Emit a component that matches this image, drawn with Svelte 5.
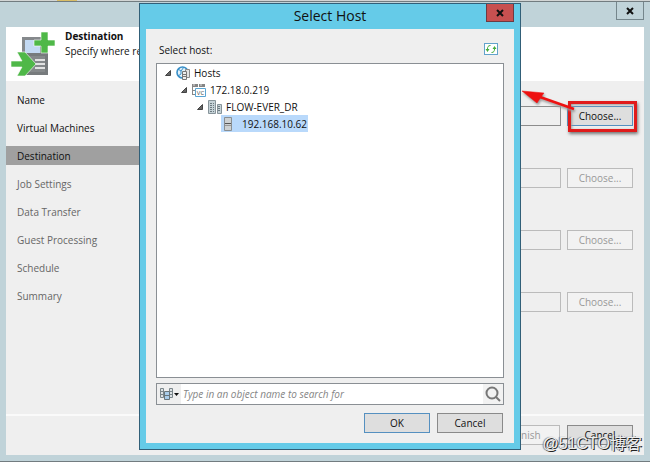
<script>
  const steps = ['Name', 'Virtual Machines', 'Destination', 'Job Settings', 'Data Transfer', 'Guest Processing', 'Schedule', 'Summary'];
  const current = 2;
  const fields = ['Host or cluster', 'Resource pool', 'VM folder', 'Datastore'];
  const tree = [
    { level: 0, icon: 'hosts', label: 'Hosts', open: true },
    { level: 1, icon: 'vcenter', label: '172.18.0.219', open: true },
    { level: 2, icon: 'datacenter', label: 'FLOW-EVER_DR', open: true },
    { level: 3, icon: 'host', label: '192.168.10.62', open: false }
  ];

  let selected = $state('192.168.10.62');
  let query = $state('');
</script>

<div class="screen">
  <div class="tab"></div>
  <div class="wizard">
    <div class="caption"><button class="close" aria-label="Close wizard">
      <svg viewBox="0 0 8 8"><path d="M1 1l6 6M7 1l-6 6" /></svg>
    </button></div>

    <div class="page">
      <header>
        <svg class="logo" viewBox="0 0 44 46">
          <path d="M11 6h21v20H11z" fill="#85898c" />
          <path d="M14 9h15v14H14z" fill="#c3d9f3" />
          <path d="M13 22h24v22H13z" fill="#777b7d" />
          <path d="M16 25h18v16H16z" fill="#85898b" />
          <path d="M24 29h10M24 33h10M24 37h10" stroke="#fff" stroke-width="1.5" />
          <path d="M30 1h7v8h7v6h-7v7h-7v-7h-7V9h7z" fill="#4fb848" stroke="#fff" stroke-width="0.6" />
          <path d="M0 30h11L6 21h8l11 12-11 12H6l5-9H0z" fill="#4fb848" stroke="#fff" stroke-width="0.6" />
        </svg>
        <div>
          <h1>Destination</h1>
          <p>Specify where re</p>
        </div>
      </header>

      <div class="content">
        <nav>
          {#each steps as step, i}
            <button class="step" class:current={i === current} class:todo={i > current}>{step}</button>
          {/each}
        </nav>
        <div class="form">
          {#each fields as field, i}
            <div class="field">
              <input aria-label={field} disabled={i > 0} />
              <button class="btn" class:focused={i === 0} disabled={i > 0}>Choose...</button>
              {#if i === 0}
                <div class="marker"></div>
                <svg class="arrow" viewBox="0 0 60 24">
                  <path d="M24 8L58 20" stroke="#ee1111" stroke-width="2.5" />
                  <path d="M6 2l22 2-3 4-4 6z" fill="#ee1111" stroke="#ee1111" stroke-width="0.5" />
                </svg>
              {/if}
            </div>
          {/each}
        </div>
      </div>

      <footer>
        <button class="btn" disabled>Finish</button>
        <button class="btn">Cancel</button>
      </footer>
    </div>
  </div>

  <div class="dialog" role="dialog" aria-labelledby="dialog-title">
    <div class="titlebar">
      <h2 id="dialog-title">Select Host</h2>
      <button class="close red" aria-label="Close">
        <svg viewBox="0 0 8 8"><path d="M1 1l6 6M7 1l-6 6" /></svg>
      </button>
    </div>
    <div class="panel">
      <div class="top">
        <span>Select host:</span>
        <button class="refresh" aria-label="Refresh">
          <svg viewBox="0 0 12 10">
            <path d="M5.500 1.500C3 1.500 2.500 3 2.500 5M6.500 8.500c2.500 0 3-1.500 3-3.500" fill="none" stroke="#45ad3d" />
            <path d="M0.500 5h4l-2 3zM7.500 5h4l-2-3z" fill="#45ad3d" />
          </svg>
        </button>
      </div>

      <ul class="tree">
        {#each tree as node}
          <li class="level{node.level}">
            {#if node.open}
              <svg class="twisty" viewBox="0 0 6 6"><path d="M5.500 0.500v5h-5z" fill="#666" stroke="#444" /></svg>
            {/if}
            <button class="node" class:selected={selected === node.label} onclick={() => (selected = node.label)}>
              <svg class="icon" viewBox="0 0 14 14">
                {#if node.icon === 'hosts'}
                  <circle cx="6.500" cy="6.500" r="5.500" fill="#e3f2fb" stroke="#388fc8" stroke-width="1.600" />
                  <path d="M2 3l3 2 3-4M2 10l3-2V5" fill="none" stroke="#388fc8" />
                  <path d="M9.500 3.500h4v8h-4z" fill="#e4e4e4" stroke="#8a8a8a" />
                  <path d="M6.500 5.500h4v8h-4z" fill="#eee" stroke="#777" />
                  <path d="M7 8.500h3M7 10.500h3" stroke="#777" />
                {:else if node.icon === 'vcenter'}
                  <path d="M0 1h6v3H0zM7 1h6v3H7z" fill="#858585" />
                  <path d="M1 2h2M8 2h2" stroke="#ddd" />
                  <path d="M0.500 4v8M1 7.500h3M1 11.500h3" fill="none" stroke="#888" />
                  <path d="M3.500 5.500h10v8h-10z" fill="#fff" stroke="#5aa5d2" />
                  <text x="8.500" y="12" text-anchor="middle">VC</text>
                {:else if node.icon === 'datacenter'}
                  <path d="M0.500 0.500h7v13h-7z" fill="#c5d2d7" stroke="#87949a" />
                  <path d="M9.500 4.500h4v9h-4z" fill="#c5d2d7" stroke="#87949a" />
                  <path d="M2 3.500h4M2 5.500h4M2 7.500h4M2 9.500h4M2 11.500h4M10 6.500h3M10 8.500h3M10 10.500h3" stroke="#6c7a80" stroke-dasharray="2 1" />
                {:else}
                  <path d="M3.500 0.500h7v13h-7z" fill="#cdd1d3" stroke="#8a8f92" />
                  <path d="M4 6.500h6" stroke="#555" />
                  <path d="M4 8.500h6" stroke="#999" />
                {/if}
              </svg>
              <span>{node.label}</span>
            </button>
          </li>
        {/each}
      </ul>

      <div class="search">
        <button class="scope" aria-label="Object type">
          <svg viewBox="0 0 20 14">
            <path d="M1.500 1.500h3v9h-3zM10.500 1.500h3v9h-3z" fill="#dde2e5" stroke="#7b868b" />
            <path d="M1 4.500h4M1 7.500h4M10 4.500h4M10 7.500h4" stroke="#7b868b" />
            <path d="M5.500 4.500h5v8h-5z" fill="#a9cdeb" stroke="#69757a" />
            <path d="M6 8.500h4" stroke="#69757a" />
            <path d="M15 6h5l-2.500 3z" fill="#111" />
          </svg>
        </button>
        <input bind:value={query} placeholder="Type in an object name to search for" aria-label="Search" />
        <button class="find" aria-label="Find">
          <svg viewBox="0 0 16 16"><circle cx="7" cy="7" r="5.500" /><path d="M11 11l4 4" /></svg>
        </button>
      </div>

      <div class="actions">
        <button class="btn focused">OK</button>
        <button class="btn">Cancel</button>
      </div>
    </div>
  </div>

  <div class="watermark">@51CTO博客</div>
</div>

<style>
  :global(body) {
    margin: 0;
  }

  .screen {
    position: relative;
    display: flex;
    flex-direction: column;
    min-height: 100vh;
    box-sizing: border-box;
    background: #d2d5d5;
    font: 10px/14px "Open Sans", "Noto Sans CJK SC", sans-serif;
    color: #111;
  }

  .tab {
    width: 20px;
    height: 1px;
    margin-left: 57px;
    background: #d9bd66;
  }

  button,
  input {
    font: inherit;
    color: inherit;
    box-sizing: border-box;
    margin: 0;
    padding: 0;
    border: 0;
    border-radius: 0;
    background: none;
  }

  h1,
  h2,
  p,
  ul {
    margin: 0;
    padding: 0;
  }

  .wizard {
    flex: 1;
    display: flex;
    flex-direction: column;
    padding: 0 6px 6px;
    border-top: 1px solid #727c80;
    border-bottom: 1px solid #727c80;
    background: #c0d3d9;
  }

  .caption {
    display: flex;
    justify-content: flex-end;
    height: 25px;
  }

  .close {
    width: 28px;
    height: 18px;
    border: 1px solid #75868c;
    border-top: 0;
    display: flex;
    align-items: center;
    justify-content: center;
  }

  .close svg {
    width: 8px;
    height: 8px;
    stroke: #111;
    stroke-width: 2;
  }

  .page {
    flex: 1;
    display: flex;
    flex-direction: column;
    background: #efefef;
  }

  header {
    display: flex;
    gap: 10px;
    height: 54px;
    box-sizing: border-box;
    padding: 2px 5px;
    background: #fff;
  }

  .logo {
    width: 44px;
    height: 46px;
    margin-top: 2px;
  }

  h1 {
    font-size: 10px;
    line-height: 15px;
  }

  .content {
    flex: 1;
    display: flex;
  }

  nav {
    display: flex;
    flex-direction: column;
    gap: 9px;
    width: 160px;
    padding-top: 9px;
  }

  .step {
    height: 19px;
    padding-left: 11px;
    text-align: left;
  }

  .current {
    background: #a0a0a0;
  }

  .todo {
    color: #666;
  }

  .form {
    flex: 1;
    display: flex;
    flex-direction: column;
    gap: 42px;
    padding: 25px 11px 0 20px;
  }

  .field {
    position: relative;
    display: flex;
    gap: 6px;
  }

  .field input {
    flex: 1;
    min-width: 0;
    height: 20px;
    border: 1px solid #8c8c8c;
  }

  .field input:disabled {
    border-color: #bbb;
  }

  .btn {
    width: 66px;
    height: 20px;
    border: 1px solid #8a8a8a;
    background: #dedede;
  }

  .btn.focused {
    border-color: #5590c0;
  }

  .btn:disabled {
    color: #999;
    border-color: #bbb;
    background: #f2f2f2;
  }

  .marker {
    position: absolute;
    right: -4px;
    top: -5px;
    width: 69px;
    height: 31px;
    box-sizing: border-box;
    border: 3px solid #e01b1b;
    box-shadow: 1px 2px 3px #777, inset 1px 1px 3px #999;
  }

  .arrow {
    position: absolute;
    right: 57px;
    top: -17px;
    width: 60px;
    height: 24px;
    filter: drop-shadow(1px 2px 1px #999);
  }

  footer {
    display: flex;
    justify-content: flex-end;
    gap: 7px;
    padding: 9px 11px 10px;
    border-top: 2px solid #fafafa;
  }

  .dialog {
    position: absolute;
    top: 3px;
    bottom: 12px;
    left: 139px;
    right: 129px;
    display: flex;
    flex-direction: column;
    padding: 0 6px 6px;
    box-sizing: border-box;
    border: 1px solid #315f78;
    background: #65cbe8;
  }

  .titlebar {
    display: flex;
    height: 25px;
  }

  h2 {
    flex: 1;
    padding-left: 28px;
    font-size: 14px;
    font-weight: 400;
    line-height: 24px;
    text-align: center;
  }

  .red {
    background: #c75050;
    border-color: #6d3a42;
  }

  .panel {
    flex: 1;
    display: flex;
    flex-direction: column;
    padding: 14px 10px 10px;
    background: #efefef;
  }

  .top {
    display: flex;
    justify-content: space-between;
    height: 20px;
    padding: 0 6px 0 3px;
  }

  .refresh {
    width: 14px;
    height: 12px;
    background: #fff;
    border: 1px solid #62a3cb;
    display: flex;
  }

  .tree {
    flex: 1;
    padding: 0 8px;
    list-style: none;
    border: 1px solid #8a8f94;
    background: #fff;
  }

  .tree li {
    display: flex;
    align-items: center;
    height: 17px;
  }

  .level1 {
    padding-left: 16px;
  }

  .level2 {
    padding-left: 32px;
  }

  .level3 {
    padding-left: 56px;
  }

  .twisty {
    width: 6px;
    height: 6px;
    margin-right: 5px;
  }

  .node {
    display: flex;
    align-items: center;
    gap: 4px;
    height: 17px;
    padding-right: 1px;
  }

  .level3 .node {
    gap: 7px;
  }

  .selected {
    background: #b9d9fb;
  }

  .icon {
    width: 14px;
    height: 14px;
  }

  .icon text {
    font-size: 6px;
    fill: #444;
  }

  .search {
    display: flex;
    align-items: center;
    height: 22px;
    box-sizing: border-box;
    margin-top: 5px;
    border: 1px solid #8a8f94;
    background: #fff;
  }

  .scope {
    width: 24px;
    height: 20px;
    padding: 3px 2px;
    background: #efefef;
  }

  .scope svg {
    display: block;
    width: 20px;
    height: 14px;
  }

  .search input {
    flex: 1;
    min-width: 0;
    padding-left: 2px;
    outline: 0;
  }

  .search input::placeholder {
    color: #858585;
    font-style: italic;
    opacity: 1;
  }

  .find {
    width: 20px;
    height: 20px;
    padding: 2px;
    background: #f2f2f2;
  }

  .find svg {
    display: block;
    width: 16px;
    height: 16px;
    fill: none;
    stroke: #777;
    stroke-width: 2;
  }

  .actions {
    display: flex;
    justify-content: flex-end;
    gap: 7px;
    margin-top: 8px;
    padding-right: 1px;
  }

  .watermark {
    position: absolute;
    right: 8px;
    bottom: 8px;
    font: 16px/20px "Liberation Sans", "Noto Sans CJK SC", sans-serif;
    color: #eee;
    text-shadow: 1px 1px 0 #222, -1px 0 1px #777;
  }
</style>
